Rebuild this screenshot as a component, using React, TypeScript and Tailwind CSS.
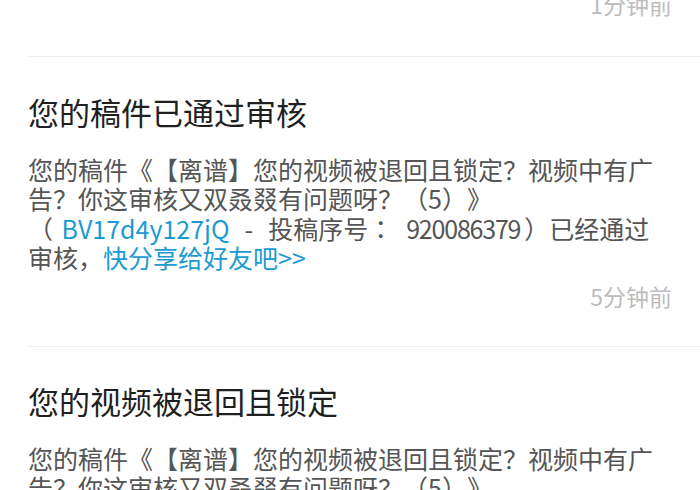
const body1 = (
  <>
    <span className="block whitespace-nowrap">您的稿件《【离谱】您的视频被退回且锁定？视频中有广</span>
    <span className="block whitespace-nowrap">告？你这审核又双叒叕有问题呀？（5）》</span>
  </>
);

function Divider() {
  return <div className="ml-[27px] h-px bg-[#f0f0f0]" />;
}

function Time({ text }: { text: string }) {
  return (
    <div className="pr-[28px] text-right text-[23px] leading-[30px] text-[#bcbcbc]">{text}</div>
  );
}

export default function App() {
  return (
    <div
      className="h-[490px] w-[700px] overflow-hidden bg-white [text-spacing-trim:space-all]"
      style={{ fontFamily: '"Noto Sans CJK SC", "Noto Sans", sans-serif' }}
    >
      {/* previous item, scrolled mostly out of view */}
      <div className="-mt-[11px] pb-[37px]">
        <Time text="1分钟前" />
      </div>
      <Divider />

      <div className="pl-[28px] pt-[35px] pb-[35px]">
        <div className="text-[31px] leading-[40px] text-[#1f1f1f]">您的稿件已通过审核</div>
        <div className="mt-[23px] text-[25px] leading-[29.4px] text-[#555555]">
          {body1}
          <span className="block whitespace-nowrap">
            （ <span className="ml-[3px] text-[#1c9ad3]">BV17d4y127jQ</span>
            <span className="ml-[15px]">-</span>
            <span className="ml-[15px]">投稿序号</span>
            {/* centred full-width colon, as the TC face draws it */}
            <span style={{ fontFamily: '"Noto Sans CJK TC", sans-serif' }}>：</span>
            <span className="ml-[13px] tracking-[-1.2px]">920086379</span>
            <span className="ml-[4px]">）已经通过</span>
          </span>
          <span className="block whitespace-nowrap">
            审核，<span className="text-[#1c9ad3]">快分享给好友吧&gt;&gt;</span>
          </span>
        </div>
        <div className="mt-[8px]">
          <Time text="5分钟前" />
        </div>
      </div>
      <Divider />

      <div className="pl-[28px] pt-[34px]">
        <div className="text-[31px] leading-[40px] text-[#1f1f1f]">您的视频被退回且锁定</div>
        <div className="mt-[23px] text-[25px] leading-[29.4px] text-[#555555]">{body1}</div>
      </div>
    </div>
  );
}
